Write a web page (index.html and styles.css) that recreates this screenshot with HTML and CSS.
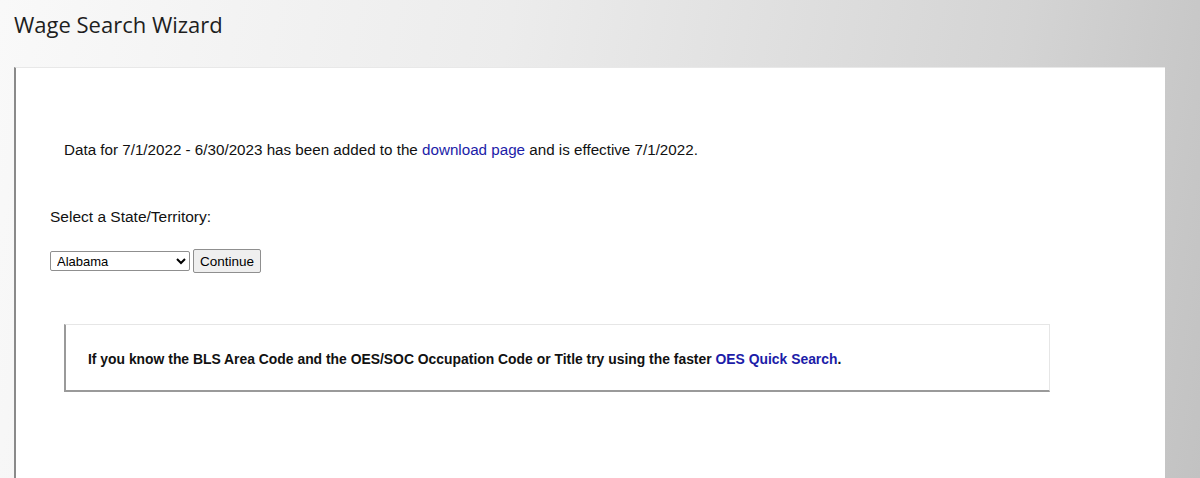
FILE: index.html
```html
<!DOCTYPE html>
<html lang="en">
<head>
  <meta charset="UTF-8" />
  <title>Wage Search Wizard</title>
  <link rel="stylesheet" href="styles.css">
</head>
<body>

  <h1 class="page-title">Wage Search Wizard</h1>

  <div class="panel">
    <p class="notice">Data for 7/1/2022 - 6/30/2023 has been added to the <a href="#">download page</a> and is effective 7/1/2022.</p>

    <form class="state-form" onsubmit="return false;">
      <label for="state-select">Select a State/Territory:</label>
      <div class="state-controls">
        <select id="state-select">
          <option>Alabama</option>
          <option>Alaska</option>
          <option>Arizona</option>
          <option>Arkansas</option>
          <option>California</option>
        </select>
        <button type="submit" class="continue-btn">Continue</button>
      </div>
    </form>

    <div class="tip-box">
      <p>If you know the BLS Area Code and the OES/SOC Occupation Code or Title try using the faster <a href="#">OES Quick Search</a>.</p>
    </div>
  </div>

</body>
</html>
```

FILE: styles.css
```css
html, body {
  height: 100%;
}

body {
  margin: 0;
  font-family: "Liberation Sans", Arial, sans-serif;
  background: linear-gradient(100deg, #f9f9f9 0%, #ececec 40%, #d4d4d4 80%, #c2c2c2 100%);
  overflow: hidden;
}

a {
  color: #1c1ca8;
  text-decoration: none;
}

.page-title {
  margin: 0;
  padding: 9px 14px 0;
  height: 57px;
  box-sizing: border-box;
  font-family: "Open Sans", "Noto Sans", sans-serif;
  font-weight: 400;
  font-size: 22px;
  color: #1e1e1e;
}

.panel {
  margin-left: 14px;
  width: 1151px;
  height: 420px;
  margin-top: 10px;
  background: #fff;
  border-left: 2px solid #8a8a8a;
  border-top: 1px solid #e8e8e8;
  box-sizing: border-box;
  padding: 73px 0 0 34px;
}

.notice {
  margin: 0 0 0 14px;
  font-size: 15.2px;
  line-height: 18px;
  color: #111;
}

.state-form {
  margin-top: 49px;
}

.state-form label {
  display: block;
  font-size: 15.5px;
  line-height: 18px;
  color: #111;
}

.state-controls {
  display: flex;
  align-items: center;
  gap: 3px;
  margin-top: 23px;
}

#state-select {
  width: 140px;
  height: 20px;
  font-family: "Liberation Sans", Arial, sans-serif;
  font-size: 13px;
  border: 1px solid #8f8f8f;
  border-radius: 2px;
  background: #fff;
  color: #000;
  padding: 0 2px;
}

.continue-btn {
  height: 24px;
  padding: 0 6px;
  font-family: "Liberation Sans", Arial, sans-serif;
  font-size: 13.5px;
  color: #000;
  background: #efefef;
  border: 1px solid #8f8f8f;
  border-radius: 2px;
}

.tip-box {
  margin: 51px 0 0 14px;
  width: 986px;
  height: 68px;
  box-sizing: border-box;
  padding: 26px 0 0 22px;
  border: 1px solid #e6e6e6;
  border-left: 2px solid #9a9a9a;
  border-bottom: 2px solid #9a9a9a;
  font-size: 13.9px;
  font-weight: bold;
  color: #111;
}

.tip-box p {
  margin: 0;
  line-height: 16px;
}
```
